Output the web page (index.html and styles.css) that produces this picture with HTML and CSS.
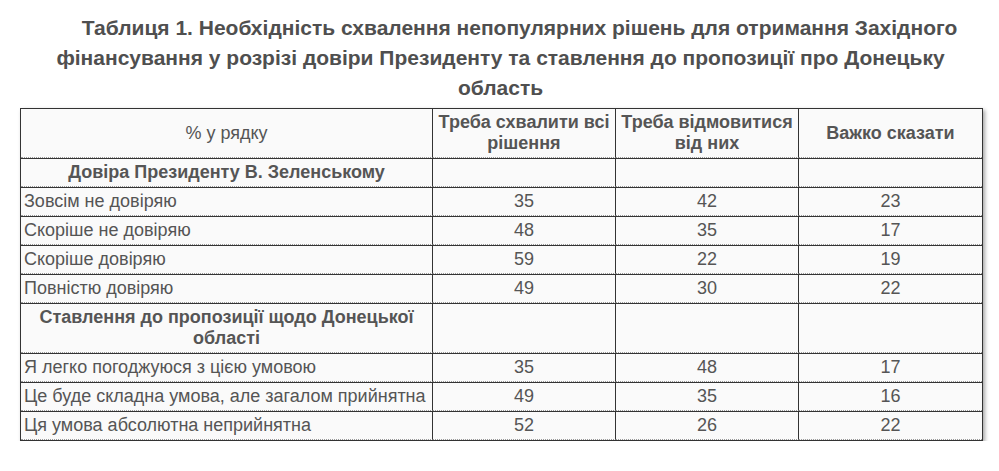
FILE: index.html
```html
<!DOCTYPE html>
<html lang="uk">
<head>
<meta charset="utf-8">
<link rel="stylesheet" href="styles.css">
</head>
<body>
<div class="page">
  <h2 class="title">Таблиця 1. Необхідність схвалення непопулярних рішень для отримання Західного фінансування у розрізі довіри Президенту та ставлення до пропозиції про Донецьку область</h2>
  <table class="data">
    <colgroup>
      <col class="c-label">
      <col class="c-num">
      <col class="c-num">
      <col class="c-num">
    </colgroup>
    <tr class="head">
      <td class="center">% у рядку</td>
      <td class="center bold">Треба схвалити всі рішення</td>
      <td class="center bold">Треба відмовитися від них</td>
      <td class="center bold">Важко сказати</td>
    </tr>
    <tr>
      <td class="center bold">Довіра Президенту В. Зеленському</td>
      <td></td><td></td><td></td>
    </tr>
    <tr><td>Зовсім не довіряю</td><td class="center">35</td><td class="center">42</td><td class="center">23</td></tr>
    <tr><td>Скоріше не довіряю</td><td class="center">48</td><td class="center">35</td><td class="center">17</td></tr>
    <tr><td>Скоріше довіряю</td><td class="center">59</td><td class="center">22</td><td class="center">19</td></tr>
    <tr><td>Повністю довіряю</td><td class="center">49</td><td class="center">30</td><td class="center">22</td></tr>
    <tr>
      <td class="center bold">Ставлення до пропозиції щодо Донецької області</td>
      <td></td><td></td><td></td>
    </tr>
    <tr><td>Я легко погоджуюся з цією умовою</td><td class="center">35</td><td class="center">48</td><td class="center">17</td></tr>
    <tr><td>Це буде складна умова, але загалом прийнятна</td><td class="center">49</td><td class="center">35</td><td class="center">16</td></tr>
    <tr><td>Ця умова абсолютна неприйнятна</td><td class="center">52</td><td class="center">26</td><td class="center">22</td></tr>
  </table>
</div>
</body>
</html>
```
FILE: styles.css
```css
html, body {
  margin: 0;
  padding: 0;
  background: #ffffff;
}
body {
  font-family: "Liberation Sans", Arial, sans-serif;
  color: #505050;
}
.page {
  width: 961px;
  margin: 0 0 0 20px;
  padding-top: 13px;
}
.title {
  margin: 0 0 5px 0;
  font-size: 21px;
  line-height: 30px;
  font-weight: bold;
  text-align: center;
  text-indent: 38px;
  color: #4f4f4f;
}
.data {
  width: 961px;
  border-collapse: separate;
  border-spacing: 0;
  border: 1px solid #333;
  background: #fafafa;
  box-shadow: 2px 2px 4px rgba(0, 0, 0, 0.35);
  table-layout: fixed;
  font-size: 18px;
  line-height: 21px;
  color: #555;
}
.c-label { width: 412px; }
.c-num { width: 183px; }
.data td {
  padding: 3px 3px;
  border-top: 1px solid #333;
  border-bottom: 1px dotted #9a9a9a;
  border-right: 1px solid #333;
  vertical-align: middle;
  text-align: left;
}
.data tr.head td {
  border-top: none;
}
.data td:last-child {
  border-right: none;
}
.data td.center {
  text-align: center;
}
.data td.bold {
  font-weight: bold;
}
```
